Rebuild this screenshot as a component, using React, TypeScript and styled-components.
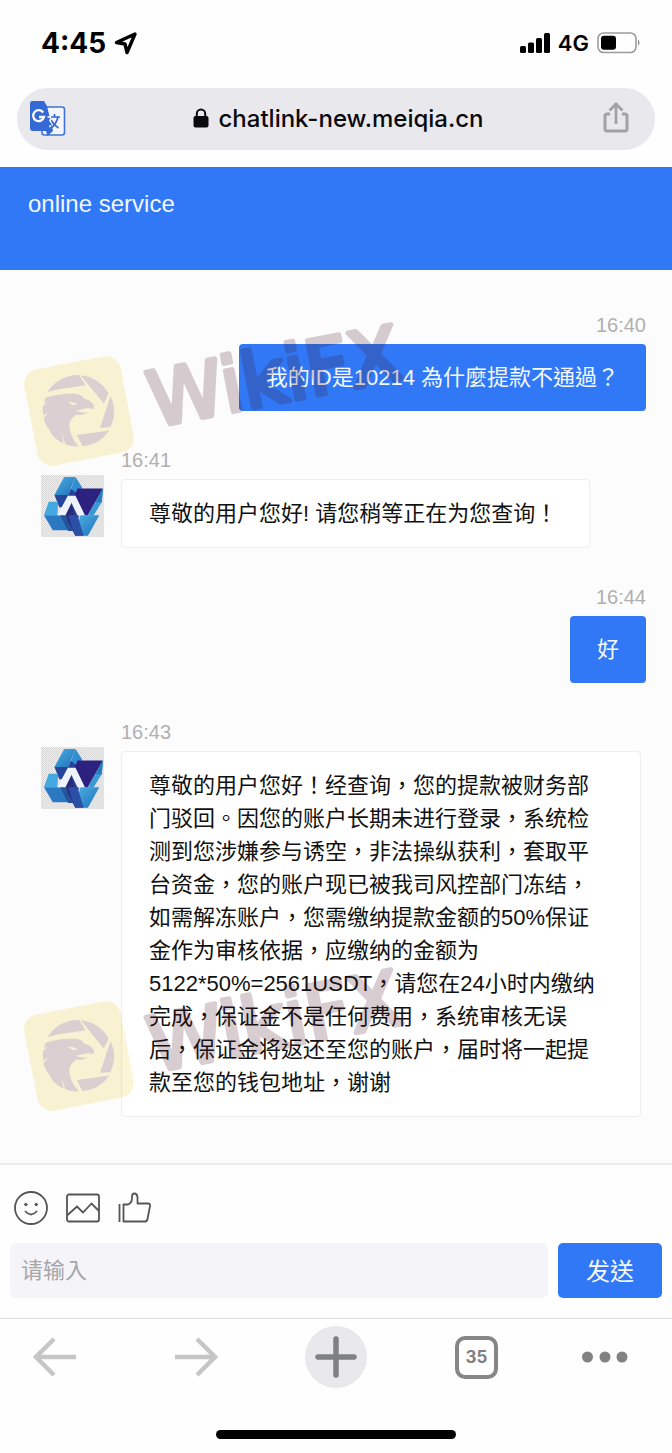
import React from "react";
import styled, { createGlobalStyle } from "styled-components";

const BLUE = "#3178f6";

const GlobalStyle = createGlobalStyle`
  * { box-sizing: border-box; }
  body {
    margin: 0;
    background: #fefefe;
    color: #111;
    font-family: "Liberation Sans", "Noto Sans CJK TC", sans-serif;
    font-size: 22px;
  }
  button, input { font: inherit; color: inherit; border: 0; margin: 0; }
  button { background: none; padding: 0; cursor: pointer; }
  svg { display: block; flex: none; }
`;

const Screen = styled.div`
  display: flex;
  flex-direction: column;
  min-height: 100vh;
`;

const StatusBar = styled.div`
  display: flex;
  align-items: center;
  justify-content: space-between;
  height: 88px;
  padding: 0 31px 2px 41px;
  font-family: Inter, sans-serif;
  color: #000;
`;

const StatusGroup = styled.div`
  display: flex;
  align-items: center;
  gap: 8px;
`;

const Clock = styled.span`
  font-size: 28px;
  font-weight: 700;
`;

const Network = styled.span`
  font-size: 22px;
  font-weight: 600;
`;

const AddressBar = styled.div`
  display: flex;
  align-items: center;
  justify-content: space-between;
  height: 62px;
  margin: 0 17px 17px;
  padding: 0 26px 2px 12px;
  border-radius: 31px;
  background: #e9e8ed;
`;

const IconButton = styled.button`
  display: flex;
  align-items: center;
  justify-content: center;
`;

const Address = styled.button`
  display: flex;
  align-items: center;
  gap: 9px;
  padding-left: 8px;
  font-family: Inter, sans-serif;
  font-size: 24px;
  font-weight: 500;
  color: #0a0a0c;
`;

const ServiceHeader = styled.header`
  height: 103px;
  padding: 20px 28px;
  background: ${BLUE};
  color: #f2f6ff;
`;

const ServiceTitle = styled.h1`
  margin: 0;
  font-size: 24px;
  font-weight: 400;
  line-height: 34px;
`;

const Chat = styled.main`
  position: relative;
  flex: 1;
  display: flex;
  flex-direction: column;
  gap: 34px;
  padding: 40px 26px 46px 41px;
  background: #fcfcfc;
`;

const Message = styled.article<{ $own?: boolean }>`
  display: flex;
  align-items: flex-start;
  justify-content: ${(p) => (p.$own ? "flex-end" : "flex-start")};
  gap: 17px;
`;

const MessageBody = styled.div<{ $own?: boolean }>`
  display: flex;
  flex-direction: column;
  align-items: ${(p) => (p.$own ? "flex-end" : "flex-start")};
  gap: 4px;
`;

const Time = styled.time`
  font-size: 20px;
  line-height: 30px;
  color: #b0b0b0;
`;

const Bubble = styled.p<{ $own?: boolean }>`
  margin: 0;
  max-width: 520px;
  padding: ${(p) => (p.$own ? "17px 27px" : "17px 32px 17px 27px")};
  border: ${(p) => (p.$own ? "0" : "1px solid #eeeeee")};
  border-radius: 4px;
  background: ${(p) => (p.$own ? BLUE : "#ffffff")};
  color: ${(p) => (p.$own ? "#f4f8ff" : "#111111")};
  line-height: 33px;
`;

const AvatarFrame = styled.div`
  flex: none;
  margin-top: 30px;
`;

const WatermarkLayer = styled.svg<{ $top: number }>`
  position: absolute;
  left: 0;
  top: ${(p) => p.$top}px;
  pointer-events: none;
`;

const WatermarkText = styled.text`
  font-family: "DejaVu Sans", sans-serif;
  font-size: 76px;
  fill: #3f0d1c;
  stroke: #3f0d1c;
  stroke-width: 5px;
  stroke-linejoin: round;
  opacity: 0.2;
`;

const Composer = styled.form`
  display: flex;
  flex-direction: column;
  gap: 17px;
  padding: 25px 10px 20px;
  border-top: 2px solid #ececec;
  background: #fefefe;
`;

const Tools = styled.div`
  display: flex;
  gap: 16px;
  padding-left: 3px;
`;

const InputRow = styled.div`
  display: flex;
  gap: 10px;
`;

const TextInput = styled.input`
  flex: 1;
  min-width: 0;
  height: 55px;
  padding: 0 11px;
  border-radius: 6px;
  background: #f4f4f9;
  &::placeholder { color: #a6a6aa; opacity: 1; }
`;

const SendButton = styled.button`
  width: 104px;
  height: 55px;
  padding-bottom: 3px;
  border-radius: 5px;
  background: ${BLUE};
  color: #f4f8ff;
  font-size: 24px;
`;

const BrowserNav = styled.nav`
  display: flex;
  justify-content: space-between;
  padding: 7px 24px 42px;
  border-top: 1px solid #dcdcde;
`;

const NavButton = styled.button<{ $filled?: boolean }>`
  display: flex;
  align-items: center;
  justify-content: center;
  width: 62px;
  height: 62px;
  border-radius: 50%;
  background: ${(p) => (p.$filled ? "#e9e9ec" : "transparent")};
`;

const MenuButton = styled(NavButton)`
  justify-content: flex-end;
`;

const TabCount = styled.span`
  display: flex;
  align-items: center;
  justify-content: center;
  width: 43px;
  height: 43px;
  border: 4px solid #868686;
  border-radius: 10px;
  color: #808080;
  font-family: Inter, sans-serif;
  font-size: 17px;
  font-weight: 700;
`;

const HomeIndicator = styled.div`
  width: 240px;
  height: 9px;
  margin: 0 auto 14px;
  border-radius: 5px;
  background: #000;
`;

const LocationIcon = () => (
  <svg width="24" height="24" viewBox="0 0 24 24" fill="none" stroke="#000" strokeWidth="3.4" strokeLinejoin="round">
    <path d="M21 3 2.500 11.500 11 13 13 21.500Z" />
  </svg>
);

const SignalIcon = () => (
  <svg width="30" height="21" viewBox="0 0 30 21">
    <rect x="0" y="13" width="6" height="7" rx="1.500" />
    <rect x="8" y="9.500" width="6" height="10.500" rx="1.500" />
    <rect x="16" y="5" width="6" height="15" rx="1.500" />
    <rect x="24" y="0" width="6" height="20" rx="1.500" />
  </svg>
);

const BatteryIcon = () => (
  <svg width="44" height="22" viewBox="0 0 44 22">
    <rect x="1" y="1" width="38" height="19.500" rx="5.500" fill="none" stroke="#9b9b9b" strokeWidth="1.600" />
    <rect x="4" y="3.700" width="15" height="14" rx="3" />
    <path d="M41 7.500q3 3.200 0 6.400Z" fill="#8b8b8b" />
  </svg>
);

const TranslateIcon = () => (
  <svg width="37" height="37" viewBox="0 0 37 37" fill="none">
    <rect x="13" y="7" width="22.500" height="28" rx="2.500" fill="#f4f5fa" stroke="#3f73d8" strokeWidth="1.600" />
    <path d="M3 1H15L18 6 24 31 18.500 36 17 31H4Q1 31 1 28V3.500Q1 1 3 1Z" fill="#3569d6" />
    <path d="M14.200 12.500A5.500 5.500 0 1 0 15 17H10" stroke="#fff" strokeWidth="2.300" />
    <path d="M22 17H31M25.500 14V17M22 20Q24.500 25 29.500 28M29 17Q27 25 21 29" stroke="#3569d6" strokeWidth="1.700" />
    <path d="M18.500 17H21M20.500 19.500 22 22.500M21.800 25.500 20.300 27" stroke="#fff" strokeWidth="1.500" />
  </svg>
);

const LockIcon = () => (
  <svg width="16" height="20" viewBox="0 0 16 20">
    <rect x="0.500" y="8" width="15" height="11.500" rx="2" fill="#0a0a0c" />
    <path d="M3.800 9V5.800a4.200 4.200 0 0 1 8.400 0V9" fill="none" stroke="#0a0a0c" strokeWidth="2" />
  </svg>
);

const ShareIcon = () => (
  <svg width="26" height="32" viewBox="0 0 26 32" fill="none" stroke="#a2a2a6" strokeWidth="3">
    <path d="M7 12H4Q2 12 2 14V27Q2 29 4 29H22Q24 29 24 27V14Q24 12 22 12H19" />
    <path d="M13 22V3M6.500 8.500 13 2 19.500 8.500" strokeWidth="2.700" />
  </svg>
);

const Avatar = () => (
  <AvatarFrame>
    <svg width="63" height="62" viewBox="123 525 188 185" role="img" aria-label="客服头像">
      <defs>
        <pattern id="checker" width="6" height="6" patternUnits="userSpaceOnUse">
          <rect width="6" height="6" fill="#f7f7f7" />
          <path d="M0 0h3v3H0zM3 3h3v3H3z" fill="#cfcfcf" />
        </pattern>
        <linearGradient id="arm" x1="0" y1="0" x2="1" y2="1">
          <stop offset="0" stopColor="#4cb0e4" />
          <stop offset="1" stopColor="#1f6fb8" />
        </linearGradient>
        <linearGradient id="deep" x1="0" y1="0" x2="1" y2="1">
          <stop offset="0" stopColor="#251c68" />
          <stop offset="1" stopColor="#3c4fae" />
        </linearGradient>
      </defs>
      <rect x="123" y="525" width="188" height="185" fill="url(#checker)" />
      <path d="M192 531H226L204 585H163Z" fill="url(#arm)" />
      <path d="M226 531 246 562 238 580 212 568Z" fill="#2f8ed4" />
      <path d="M163 585H204L212 566 236 582 218 612 178 622Z" fill="#26449a" />
      <path d="M232 565H308L262 646H246L222 590Z" fill="#2d2180" />
      <path d="M308 565 304 606 280 646H262Z" fill="#3a9ad8" />
      <path d="M308 565 304 606 285 606Z" fill="#247dbd" />
      <path d="M146 605H174L172 645H132Z" fill="#42a8df" />
      <path d="M132 645H185L205 690H158Z" fill="#2a78c2" />
      <path d="M180 645 213 606 236 648 222 692H204Z" fill="#26539d" />
      <path d="M198 640 214 612 250 706H225L204 665Z" fill="url(#deep)" />
      <path d="M240 645H297L263 706H225Z" fill="url(#arm)" />
      <path d="M204 645H232L250 706H225Z" fill="#2c4fa6" />
      <path d="M203 587H226L254 645H232L214 608 196 645H172Z" fill="#eef3fb" />
    </svg>
  </AvatarFrame>
);

const Watermark = ({ top }: { top: number }) => (
  <WatermarkLayer $top={top} width="440" height="170" viewBox="0 0 440 170" aria-hidden="true">
    <rect x="30" y="52" width="98" height="98" rx="15" fill="#f2cc2c" fillOpacity="0.2" transform="rotate(-11 79 101)" />
    <g transform="translate(20 35) scale(0.333)" fill="#dccfd2">
      <path d="M82 142A108 108 0 0 1 178 90L197 121 112 134Z" />
      <path d="M182 91A108 108 0 0 1 266 145L252 176 222 140Z" />
      <path d="M272 153A108 108 0 0 1 272 246L240 249Z" />
      <path d="M268 257A108 108 0 0 1 188 304L171 270Z" />
      <path d="M77 158Q120 146 160 146 186 147 192 161 212 166 222 181L221 193Q204 187 187 193L168 198Q182 204 204 202 190 213 170 209 152 220 148 238 147 270 176 305 155 306 136 298L124 260 131 296Q105 284 92 264L88 245 91 258Q74 238 71 220L86 202 70 212Q67 195 69 183L84 170 72 176Z" />
      <path d="M144 170 158 181 174 177 160 172Z" fill="#fbf0cf" />
    </g>
    <WatermarkText x="154" y="117" transform="rotate(-11 154 117)">
      WikiFX
    </WatermarkText>
  </WatermarkLayer>
);

const SmileIcon = () => (
  <svg width="36" height="36" viewBox="0 0 36 36" fill="none" stroke="#555" strokeWidth="1.800" strokeLinecap="round">
    <circle cx="18" cy="18" r="16" />
    <path d="M12.500 21.500Q18 27.500 23.500 21.500" />
    <circle cx="12.800" cy="14.500" r="1.200" fill="#555" strokeWidth="1" />
    <circle cx="23.200" cy="14.500" r="1.200" fill="#555" strokeWidth="1" />
  </svg>
);

const PictureIcon = () => (
  <svg width="36" height="36" viewBox="0 0 36 36" fill="none" stroke="#555" strokeWidth="1.800">
    <rect x="2" y="4.500" width="32" height="27" rx="2" />
    <path d="M2 25.500 12 16.500 18 22.500 26.500 13.500 34 21" />
  </svg>
);

const ThumbIcon = () => (
  <svg width="36" height="36" viewBox="0 0 36 36" fill="none" stroke="#555" strokeWidth="1.800" strokeLinejoin="round">
    <path d="M2.500 14V32M6.500 14.500H11Q15 13 15 8V6.500Q15 3.500 17.500 3.500T20.500 7V13.500H31Q33.500 13.500 33 16L30.500 29Q30 31.500 28 31.500H6.500Z" />
  </svg>
);

const ArrowIcon = ({ d }: { d: string }) => (
  <svg width="44" height="40" viewBox="0 0 44 40" fill="none" stroke="#c6c6c6" strokeWidth="4.500">
    <path d={d} />
  </svg>
);

const PlusIcon = () => (
  <svg width="42" height="42" viewBox="0 0 42 42" stroke="#7e8083" strokeWidth="5.500" strokeLinecap="round">
    <path d="M21 3V39M3 21H39" />
  </svg>
);

const DotsIcon = () => (
  <svg width="70" height="12" viewBox="0 0 70 12" fill="#808284">
    <circle cx="9.500" cy="6" r="5.500" />
    <circle cx="27" cy="6" r="5.500" />
    <circle cx="44" cy="6" r="5.500" />
  </svg>
);

type ChatMessage = { id: number; time: string; text: string; own?: boolean };

const messages: ChatMessage[] = [
  { id: 1, time: "16:40", text: "我的ID是10214 為什麼提款不通過？", own: true },
  { id: 2, time: "16:41", text: "尊敬的用户您好! 请您稍等正在为您查询！" },
  { id: 3, time: "16:44", text: "好", own: true },
  {
    id: 4,
    time: "16:43",
    text: "尊敬的用户您好！经查询，您的提款被财务部门驳回。因您的账户长期未进行登录，系统检测到您涉嫌参与诱空，非法操纵获利，套取平台资金，您的账户现已被我司风控部门冻结，如需解冻账户，您需缴纳提款金额的50%保证金作为审核依据，应缴纳的金额为5122*50%=2561USDT，请您在24小时内缴纳完成，保证金不是任何费用，系统审核无误后，保证金将返还至您的账户，届时将一起提款至您的钱包地址，谢谢",
  },
];

export default function App() {
  return (
    <Screen lang="zh-Hant">
      <GlobalStyle />
      <StatusBar>
        <StatusGroup>
          <Clock>4:45</Clock>
          <LocationIcon />
        </StatusGroup>
        <StatusGroup>
          <SignalIcon />
          <Network>4G</Network>
          <BatteryIcon />
        </StatusGroup>
      </StatusBar>
      <AddressBar>
        <IconButton type="button" aria-label="Translate">
          <TranslateIcon />
        </IconButton>
        <Address type="button">
          <LockIcon />
          chatlink-new.meiqia.cn
        </Address>
        <IconButton type="button" aria-label="Share">
          <ShareIcon />
        </IconButton>
      </AddressBar>
      <ServiceHeader>
        <ServiceTitle>online service</ServiceTitle>
      </ServiceHeader>
      <Chat>
        {messages.map((m) => (
          <Message key={m.id} $own={m.own}>
            {!m.own && <Avatar />}
            <MessageBody $own={m.own}>
              <Time>{m.time}</Time>
              <Bubble $own={m.own}>{m.text}</Bubble>
            </MessageBody>
          </Message>
        ))}
        <Watermark top={40} />
        <Watermark top={685} />
      </Chat>
      <Composer onSubmit={(e) => e.preventDefault()}>
        <Tools>
          <IconButton type="button" aria-label="Emoji">
            <SmileIcon />
          </IconButton>
          <IconButton type="button" aria-label="Picture">
            <PictureIcon />
          </IconButton>
          <IconButton type="button" aria-label="Like">
            <ThumbIcon />
          </IconButton>
        </Tools>
        <InputRow>
          <TextInput type="text" placeholder="请输入" aria-label="请输入" />
          <SendButton type="submit">发送</SendButton>
        </InputRow>
      </Composer>
      <BrowserNav>
        <NavButton type="button" aria-label="Back">
          <ArrowIcon d="M43 20H4M21 2 3 20 21 38" />
        </NavButton>
        <NavButton type="button" aria-label="Forward">
          <ArrowIcon d="M1 20H40M23 2 41 20 23 38" />
        </NavButton>
        <NavButton type="button" aria-label="New tab" $filled>
          <PlusIcon />
        </NavButton>
        <NavButton type="button" aria-label="Tabs">
          <TabCount>35</TabCount>
        </NavButton>
        <MenuButton type="button" aria-label="Menu">
          <DotsIcon />
        </MenuButton>
      </BrowserNav>
      <HomeIndicator />
    </Screen>
  );
}
